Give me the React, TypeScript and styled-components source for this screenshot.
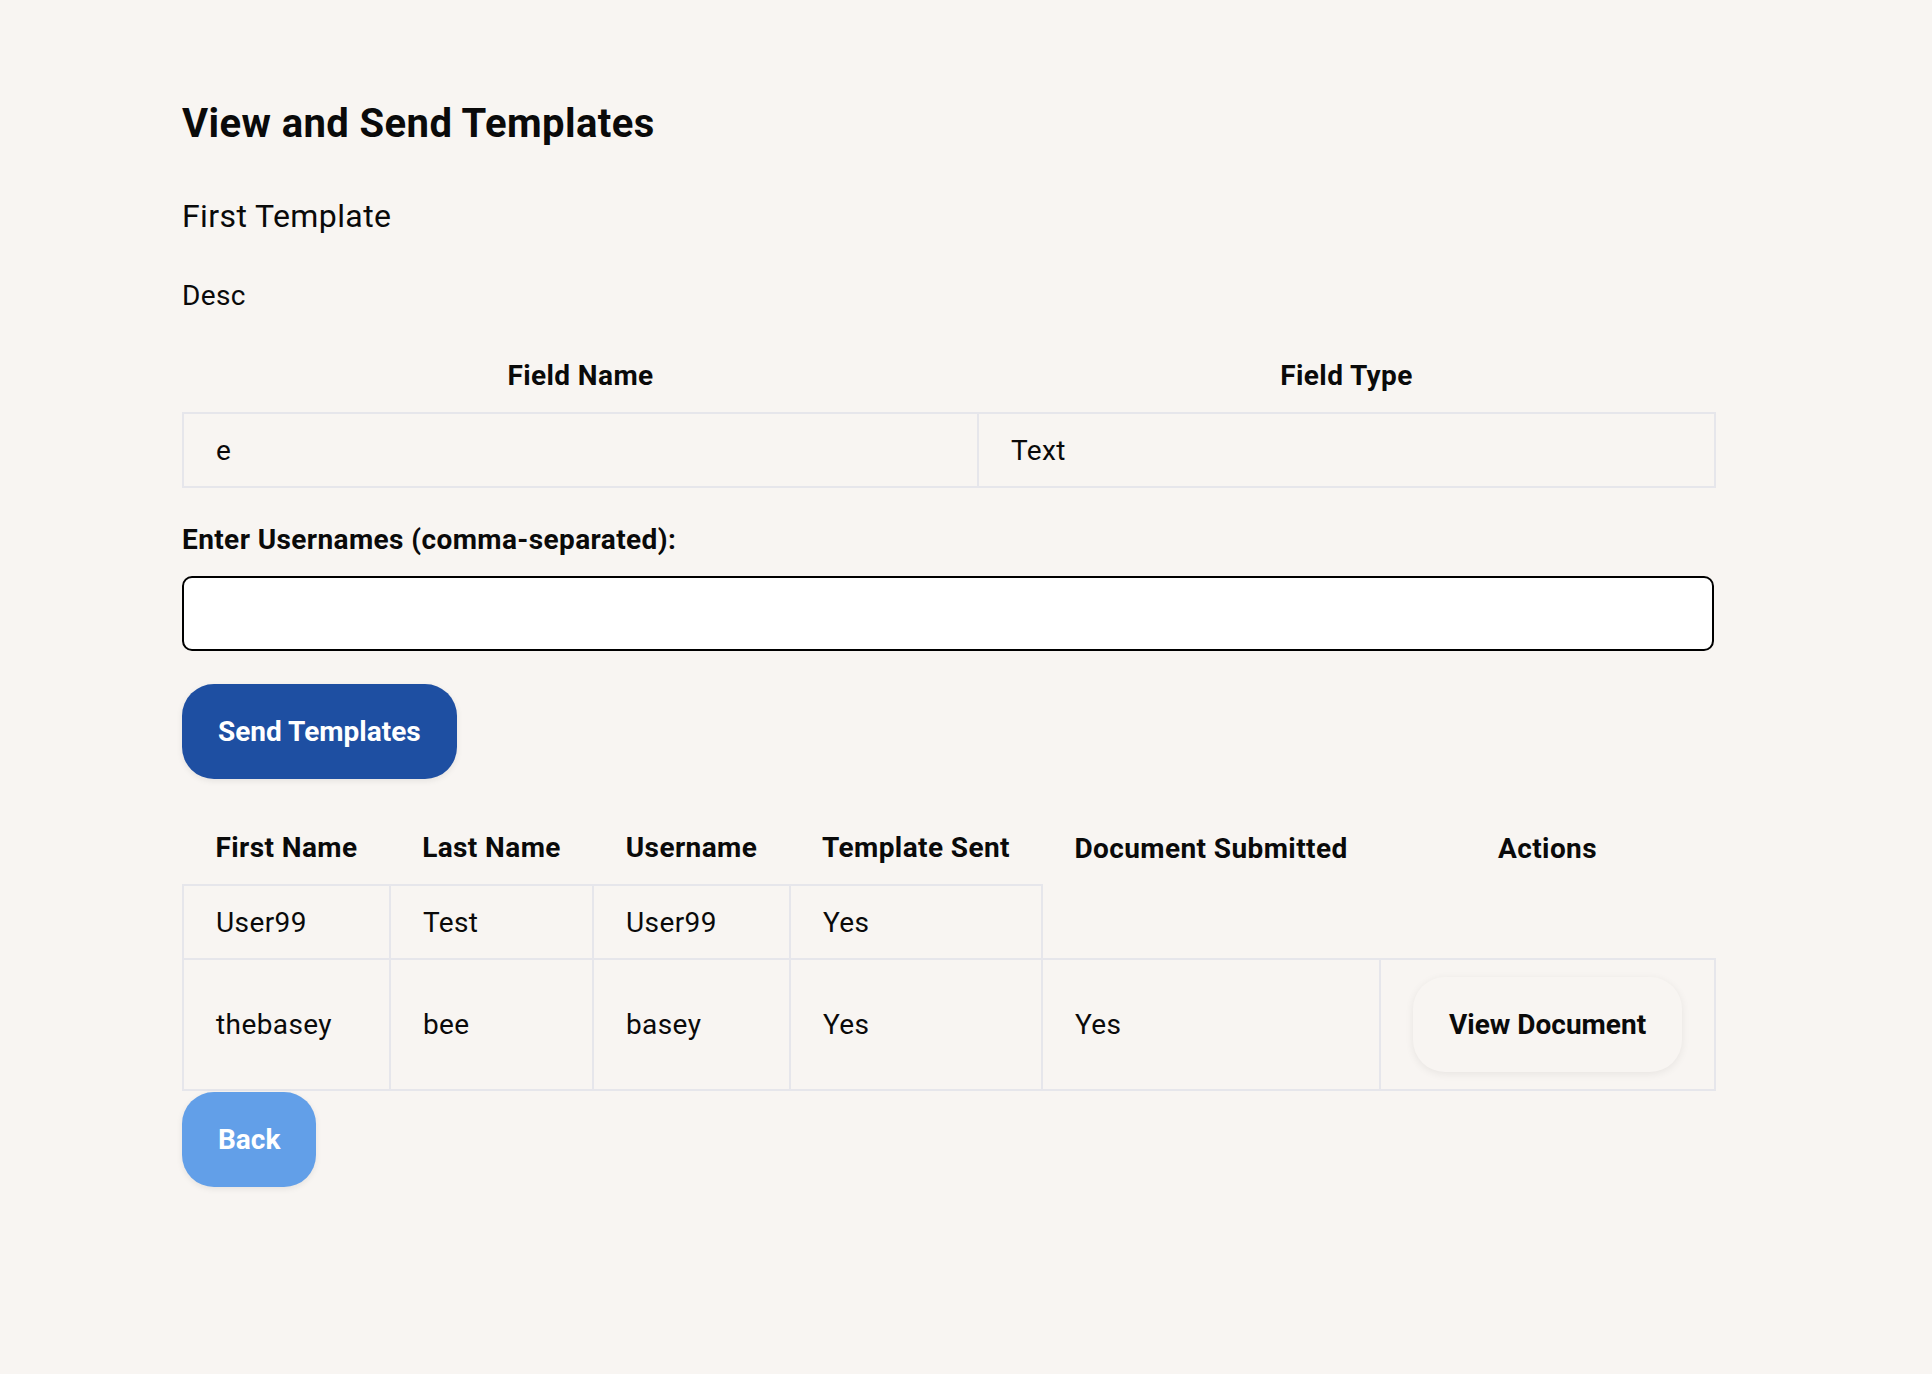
import React from "react";
import styled, { createGlobalStyle } from "styled-components";

const GlobalStyle = createGlobalStyle`
  html, body {
    margin: 0;
    padding: 0;
    background: #f8f5f2;
  }
  body {
    font-family: Roboto, "Liberation Sans", Arial, sans-serif;
    color: #111;
    letter-spacing: 0.4px;
    min-height: 1374px;
  }
  * { box-sizing: border-box; }
`;

const Page = styled.main`
  width: 1532px;
  margin-left: 182px;
  padding-top: 100px;
  padding-bottom: 120px;
`;

const Title = styled.h1`
  margin: 0 0 50px;
  font-size: 40px;
  font-weight: 700;
  line-height: normal;
  color: #0a0a0a;
`;

const TemplateName = styled.h2`
  margin: 0 0 44px;
  font-size: 32px;
  font-weight: 400;
  line-height: normal;
  color: #0a0a0a;
`;

const Description = styled.p`
  margin: 0 0 27px;
  font-size: 28px;
  line-height: normal;
  color: #0a0a0a;
`;

const Table = styled.table<{ $gapBottom?: number; $gapTop?: number }>`
  width: 100%;
  table-layout: fixed;
  border-collapse: collapse;
  margin-top: ${(p) => p.$gapTop ?? 0}px;
  margin-bottom: ${(p) => p.$gapBottom ?? 0}px;
`;

const HeadCell = styled.th`
  padding: 20px 32px;
  font-size: 28px;
  font-weight: 700;
  line-height: normal;
  text-align: center;
  color: #0a0a0a;
  white-space: nowrap;
`;

const Cell = styled.td<{ $tight?: boolean }>`
  padding: ${(p) => (p.$tight ? "17px 32px" : "19.5px 32px")};
  border: 2px solid #e6e6eb;
  font-size: 28px;
  line-height: normal;
  text-align: left;
  vertical-align: middle;
  color: #0a0a0a;
  white-space: nowrap;
`;

const Label = styled.label`
  display: block;
  margin: 0 0 20px;
  font-size: 28px;
  font-weight: 700;
  line-height: normal;
  color: #0a0a0a;
`;

const UsernameInput = styled.input`
  display: block;
  width: 100%;
  height: 75px;
  padding: 0 20px;
  border: 2px solid #000;
  border-radius: 10px;
  background: #fff;
  font-family: inherit;
  font-size: 28px;
  outline: none;
`;

type Variant = "primary" | "light" | "ghost";

const palette: Record<Variant, { bg: string; fg: string; shadow: string }> = {
  primary: { bg: "#1e4fa2", fg: "#fff", shadow: "0 2px 6px rgba(0,0,0,0.08)" },
  light: { bg: "#629fe8", fg: "#fff", shadow: "0 2px 6px rgba(0,0,0,0.08)" },
  ghost: { bg: "#f8f5f2", fg: "#0a0a0a", shadow: "0 2px 8px rgba(0,0,0,0.07)" },
};

const Button = styled.button<{ $variant: Variant }>`
  display: inline-block;
  padding: 31px 36px;
  border: none;
  border-radius: 32px;
  background: ${(p) => palette[p.$variant].bg};
  color: ${(p) => palette[p.$variant].fg};
  box-shadow: ${(p) => palette[p.$variant].shadow};
  font-family: inherit;
  font-size: 28px;
  font-weight: 700;
  letter-spacing: 0;
  line-height: normal;
  white-space: nowrap;
  cursor: pointer;
`;

const ButtonRow = styled.div<{ $gapTop?: number }>`
  display: flex;
  margin-top: ${(p) => p.$gapTop ?? 0}px;
`;

const users = [
  { first: "User99", last: "Test", username: "User99", sent: "Yes", submitted: null as string | null },
  { first: "thebasey", last: "bee", username: "basey", sent: "Yes", submitted: "Yes" },
];

export default function App() {
  return (
    <>
      <GlobalStyle />
      <Page>
        <Title>View and Send Templates</Title>
        <TemplateName>First Template</TemplateName>
        <Description>Desc</Description>

        <Table $gapBottom={35}>
          <colgroup>
            <col style={{ width: 795 }} />
            <col style={{ width: 737 }} />
          </colgroup>
          <thead>
            <tr>
              <HeadCell>Field Name</HeadCell>
              <HeadCell>Field Type</HeadCell>
            </tr>
          </thead>
          <tbody>
            <tr>
              <Cell>e</Cell>
              <Cell>Text</Cell>
            </tr>
          </tbody>
        </Table>

        <Label htmlFor="usernames">Enter Usernames (comma-separated):</Label>
        <UsernameInput id="usernames" type="text" />

        <ButtonRow $gapTop={33}>
          <Button $variant="primary">Send Templates</Button>
        </ButtonRow>

        <Table $gapTop={32}>
          <colgroup>
            <col style={{ width: 207 }} />
            <col style={{ width: 203 }} />
            <col style={{ width: 197 }} />
            <col style={{ width: 252 }} />
            <col style={{ width: 338 }} />
            <col style={{ width: 335 }} />
          </colgroup>
          <thead>
            <tr>
              <HeadCell>First Name</HeadCell>
              <HeadCell>Last Name</HeadCell>
              <HeadCell>Username</HeadCell>
              <HeadCell>Template Sent</HeadCell>
              <HeadCell>Document Submitted</HeadCell>
              <HeadCell>Actions</HeadCell>
            </tr>
          </thead>
          <tbody>
            {users.map((u) => (
              <tr key={u.username}>
                <Cell>{u.first}</Cell>
                <Cell>{u.last}</Cell>
                <Cell>{u.username}</Cell>
                <Cell>{u.sent}</Cell>
                {u.submitted && (
                  <>
                    <Cell>{u.submitted}</Cell>
                    <Cell $tight>
                      <Button $variant="ghost">View Document</Button>
                    </Cell>
                  </>
                )}
              </tr>
            ))}
          </tbody>
        </Table>

        <ButtonRow $gapTop={1}>
          <Button $variant="light">Back</Button>
        </ButtonRow>
      </Page>
    </>
  );
}
